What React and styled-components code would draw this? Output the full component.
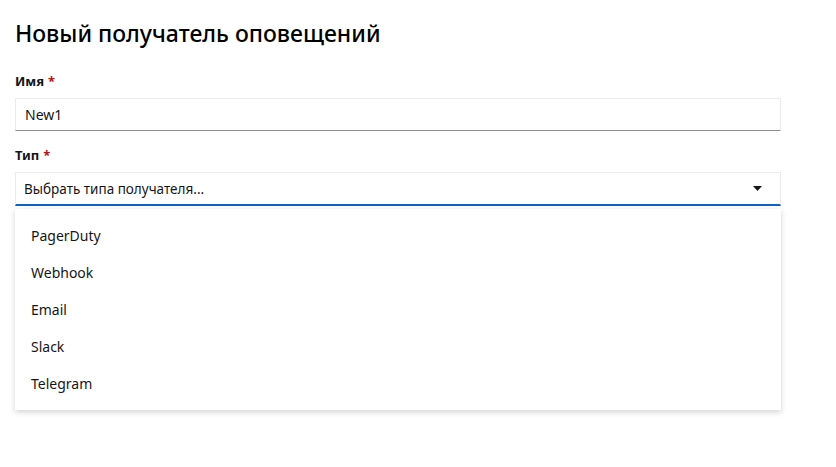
import React from 'react';
import styled, { createGlobalStyle } from 'styled-components';

const GlobalStyle = createGlobalStyle`
  body {
    margin: 0;
    background: #fff;
    font-family: "Noto Sans", "Liberation Sans", sans-serif;
    color: #161616;
  }
`;

const Page = styled.div`
  width: 766px;
  padding: 18px 15px 40px;
`;

const Title = styled.h1`
  margin: 0 0 25px;
  font-family: "Noto Sans", "Liberation Sans", sans-serif;
  font-size: 23px;
  font-weight: 500;
  line-height: 30px;
  color: #000;
`;

const Field = styled.div`
  display: flex;
  flex-direction: column;
  margin-bottom: 16px;
`;

const Label = styled.label`
  font-size: 13px;
  font-weight: 700;
  line-height: 16px;
  margin-bottom: 9px;
  color: #161616;
`;

const Required = styled.span`
  color: #a2191f;
  margin-left: 4px;
`;

const TextInput = styled.input`
  box-sizing: border-box;
  height: 33px;
  padding: 0 9px;
  border: 1px solid #ebebeb;
  border-bottom: 1px solid #8d8d8d;
  background: #fff;
  font-family: "Noto Sans", sans-serif;
  font-size: 14px;
  color: #161616;
  outline: none;
`;

const SelectBox = styled.div`
  box-sizing: border-box;
  height: 34px;
  padding: 0 8px;
  display: flex;
  align-items: center;
  justify-content: space-between;
  border: 1px solid #ebebeb;
  border-bottom: 2px solid #0f62c6;
  font-size: 13.5px;
  color: #161616;
`;

const Caret = styled.svg`
  width: 9px;
  height: 5px;
  margin-right: 10px;
`;

const Menu = styled.ul`
  margin: 3px 0 0;
  padding: 8px 0;
  list-style: none;
  background: #fff;
  box-shadow: 0 2px 6px rgba(0, 0, 0, 0.18);
`;

const Item = styled.li`
  height: 37px;
  display: flex;
  align-items: center;
  padding: 0 16px;
  font-size: 14px;
  color: #161616;
`;

const options = ['PagerDuty', 'Webhook', 'Email', 'Slack', 'Telegram'];

const App = () => (
  <>
    <GlobalStyle />
    <Page>
      <Title>Новый получатель оповещений</Title>
      <Field>
        <Label>
          Имя<Required>*</Required>
        </Label>
        <TextInput defaultValue="New1" />
      </Field>
      <Field>
        <Label>
          Тип<Required>*</Required>
        </Label>
        <SelectBox>
          <span>Выбрать типа получателя...</span>
          <Caret viewBox="0 0 9 5">
            <path d="M0 0h9L4.5 5z" fill="#161616" />
          </Caret>
        </SelectBox>
        <Menu>
          {options.map((o) => (
            <Item key={o}>{o}</Item>
          ))}
        </Menu>
      </Field>
    </Page>
  </>
);

export default App;
